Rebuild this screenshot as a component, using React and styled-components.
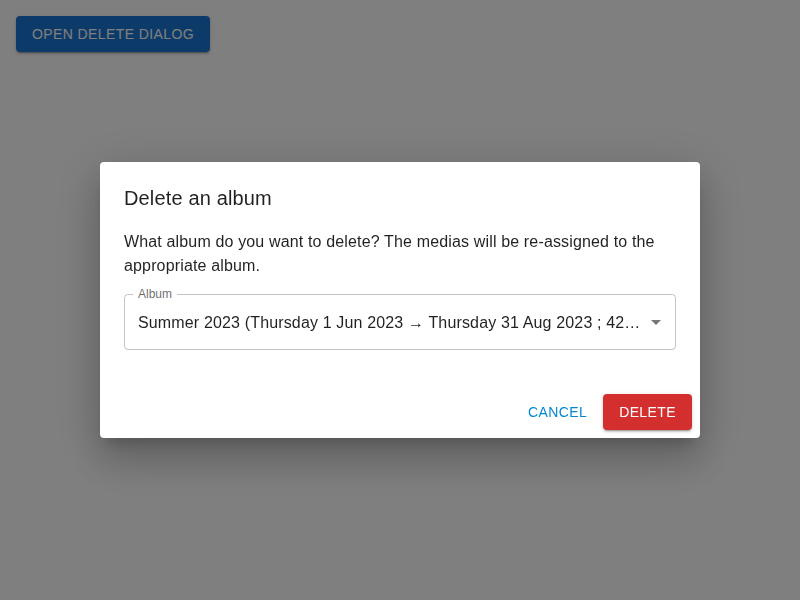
import React from "react";
import styled, { createGlobalStyle } from "styled-components";

const Global = createGlobalStyle`
  html, body { margin: 0; padding: 0; background: #fff; }
  body { font-family: "Liberation Sans", Arial, Helvetica, sans-serif; }
  * { box-sizing: border-box; }
`;

const Page = styled.div`
  padding: 16px;
  min-height: 600px;
`;

const ContainedButton = styled.button`
  font-family: inherit;
  font-size: 14px;
  font-weight: 500;
  letter-spacing: 0.4px;
  text-transform: uppercase;
  line-height: 24px;
  padding: 6px 16px;
  min-width: 64px;
  border: 0;
  border-radius: 4px;
  color: #fff;
  background: ${(p) => p.$bg};
  box-shadow: 0 3px 1px -2px rgba(0,0,0,0.2), 0 2px 2px 0 rgba(0,0,0,0.14), 0 1px 5px 0 rgba(0,0,0,0.12);
  cursor: pointer;
`;

const TextButton = styled.button`
  font-family: inherit;
  font-size: 14px;
  font-weight: 500;
  letter-spacing: 0.4px;
  text-transform: uppercase;
  line-height: 24px;
  padding: 6px 8px;
  min-width: 64px;
  border: 0;
  border-radius: 4px;
  background: transparent;
  color: ${(p) => p.$color};
  cursor: pointer;
`;

const Backdrop = styled.div`
  position: fixed;
  inset: 0;
  background: rgba(0, 0, 0, 0.5);
  display: flex;
  align-items: center;
  justify-content: center;
`;

const Dialog = styled.div`
  width: 600px;
  background: #fff;
  border-radius: 4px;
  color: rgba(0, 0, 0, 0.87);
  box-shadow: 0 11px 15px -7px rgba(0,0,0,0.2), 0 24px 38px 3px rgba(0,0,0,0.14), 0 9px 46px 8px rgba(0,0,0,0.12);
  display: flex;
  flex-direction: column;
`;

const Title = styled.h2`
  margin: 0;
  padding: 20px 24px 16px;
  font-size: 20px;
  font-weight: 500;
  line-height: 32px;
  letter-spacing: 0.15px;
`;

const Content = styled.div`
  padding: 0 24px 20px;
`;

const Text = styled.p`
  margin: 0;
  font-size: 16px;
  line-height: 24px;
  letter-spacing: 0.15px;
  color: rgba(0, 0, 0, 0.87);
`;

const Field = styled.div`
  position: relative;
  margin: 16px 0;
  height: 56px;
  border: 1px solid rgba(0, 0, 0, 0.23);
  border-radius: 4px;
  display: flex;
  align-items: center;
  padding: 0 32px 0 13px;
`;

const FieldLabel = styled.span`
  position: absolute;
  top: -8px;
  left: 8px;
  padding: 0 5px;
  background: #fff;
  font-size: 12px;
  line-height: 14px;
  color: rgba(0, 0, 0, 0.6);
`;

const Value = styled.div`
  flex: 1;
  min-width: 0;
  font-size: 16px;
  line-height: 23px;
  letter-spacing: 0.15px;
  white-space: nowrap;
  overflow: hidden;
  text-overflow: ellipsis;
`;

const DropIcon = styled.svg`
  position: absolute;
  right: 7px;
  top: 15px;
  width: 24px;
  height: 24px;
  fill: rgba(0, 0, 0, 0.54);
`;

const Actions = styled.div`
  padding: 8px;
  display: flex;
  justify-content: flex-end;
  align-items: center;
  gap: 8px;
`;

export default function App() {
  return (
    <>
      <Global />
      <Page>
        <ContainedButton $bg="#1976d2">Open delete dialog</ContainedButton>
      </Page>
      <Backdrop>
        <Dialog>
          <Title>Delete an album</Title>
          <Content>
            <Text>
              What album do you want to delete? The medias will be re-assigned to the appropriate album.
            </Text>
            <Field>
              <FieldLabel>Album</FieldLabel>
              <Value>
                Summer 2023 (Thursday 1 Jun 2023 → Thursday 31 Aug 2023 ; 42 medias)
              </Value>
              <DropIcon viewBox="0 0 24 24">
                <path d="M7 10l5 5 5-5z" />
              </DropIcon>
            </Field>
          </Content>
          <Actions>
            <TextButton $color="#0288d1">Cancel</TextButton>
            <ContainedButton $bg="#d32f2f">Delete</ContainedButton>
          </Actions>
        </Dialog>
      </Backdrop>
    </>
  );
}
